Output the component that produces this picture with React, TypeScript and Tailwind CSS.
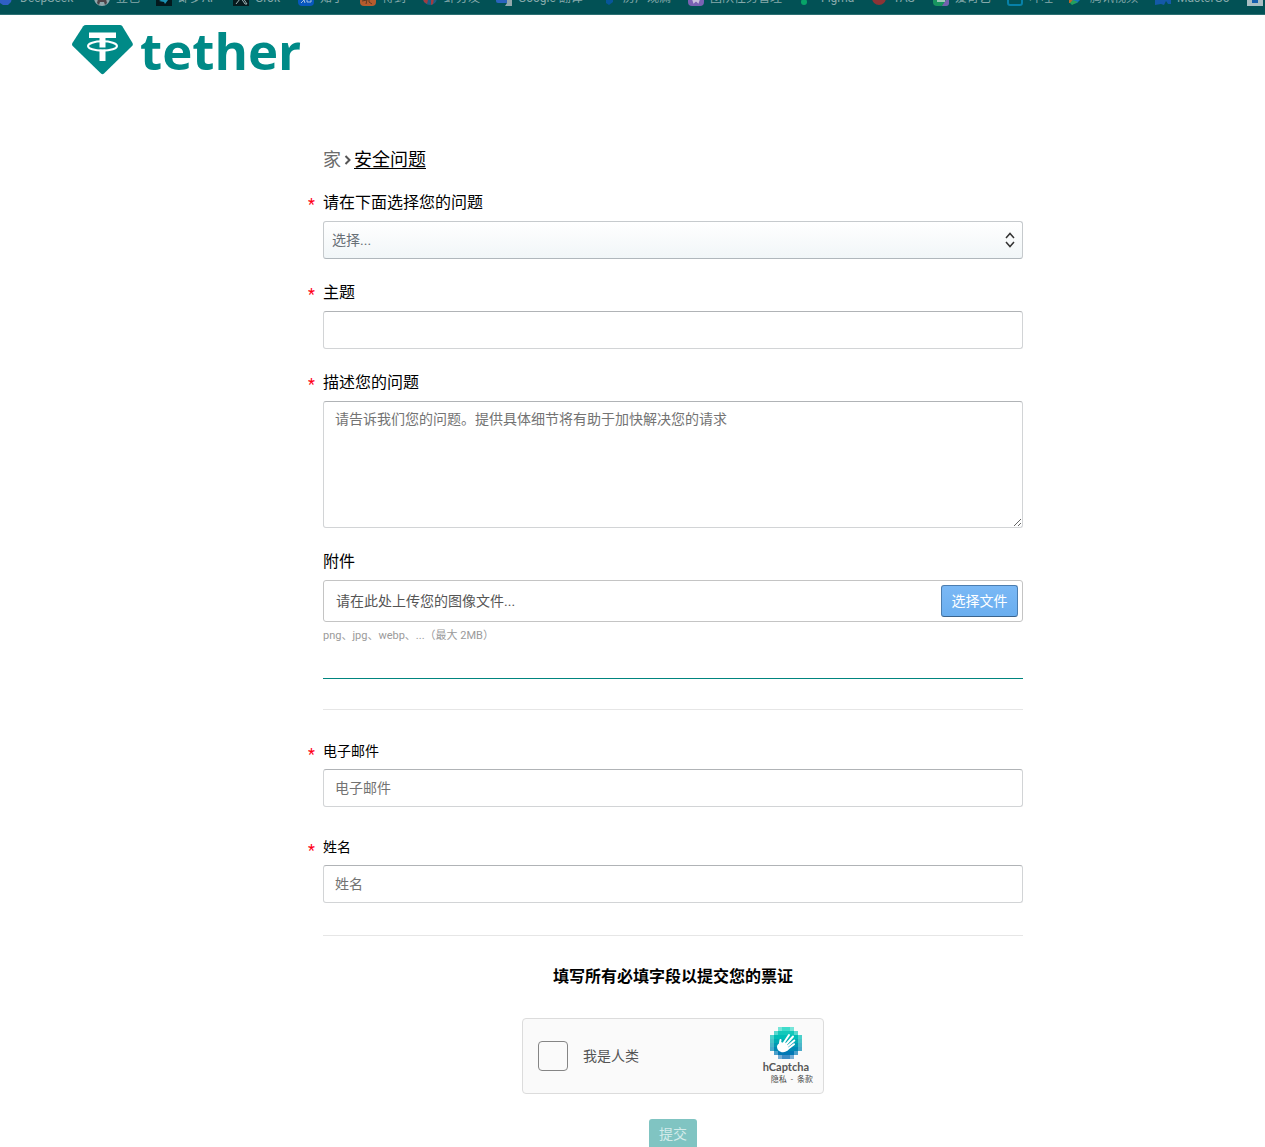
import { useRef, useState } from "react";
import type { ReactNode } from "react";

type Bookmark = { label: string; width: string; icon: ReactNode };

const bookmarks: Bookmark[] = [
  {
    label: "DeepSeek",
    width: "w-[96px]",
    icon: <path d="M0 8h14l-1 4-3 3H5l-3-2z" fill="#2f5fc4" />,
  },
  {
    label: "豆包",
    width: "w-[62px]",
    icon: (
      <>
        <circle cx="8" cy="8" r="8" fill="#8fa7ab" />
        <path d="M4 9h8l1 4-2 2-1-3H6l-1 3-2-2z" fill="#4d4347" />
      </>
    ),
  },
  {
    label: "即梦AI",
    width: "w-[77px]",
    icon: (
      <>
        <path d="M0 0h16v16H0z" fill="#03191d" />
        <path d="M3 11l4-2 5 1-3 4-1-2z" fill="#1b93b4" />
      </>
    ),
  },
  {
    label: "Grok",
    width: "w-[65px]",
    icon: (
      <>
        <path d="M0 0h16v16H0z" fill="#071a1d" />
        <path d="M3 14l4-5M8 8l4 6h2l-4-6" fill="none" stroke="#9db4b6" />
      </>
    ),
  },
  {
    label: "知乎",
    width: "w-[62px]",
    icon: (
      <>
        <rect width="16" height="16" rx="4" fill="#0757bd" />
        <path d="M3 13l3-3 1 3M9 9h4v3H9z" fill="none" stroke="#a5c1df" />
      </>
    ),
  },
  {
    label: "得到",
    width: "w-[62px]",
    icon: (
      <>
        <rect width="16" height="16" rx="4" fill="#b55c2e" />
        <path d="M2 11l5-1-1 4M9 9v3l3 2M12 9h2" fill="none" stroke="#5c3a24" />
      </>
    ),
  },
  {
    label: "虾分发",
    width: "w-[74px]",
    icon: (
      <>
        <circle cx="8" cy="8" r="7" fill="#1a5f86" />
        <path d="M1 9l5 1-1 4-3-2zM9 8l3 1-1 5-2 1z" fill="#a03c40" />
      </>
    ),
  },
  {
    label: "Google 翻译",
    width: "w-[105px]",
    icon: (
      <>
        <path d="M0 0h11v13H2a2 2 0 0 1-2-2z" fill="#2a63bd" />
        <path d="M11 7h5v9H9l2-3z" fill="#93a8ac" />
      </>
    ),
  },
  { label: "房产观澜", width: "w-[87px]", icon: <path d="M5 8h7v4l-4 3-3-2z" fill="#07559a" /> },
  {
    label: "团队任务管理",
    width: "w-[111px]",
    icon: (
      <>
        <rect width="16" height="16" rx="4" fill="#7a62b3" />
        <path d="M5 9l1 3 2-2 2 2 1-3" fill="none" stroke="#c9c0dd" strokeWidth="2" />
      </>
    ),
  },
  { label: "Figma", width: "w-[72px]", icon: <circle cx="5" cy="12" r="3" fill="#07a468" /> },
  { label: "TAS", width: "w-[62px]", icon: <circle cx="8" cy="8" r="7" fill="#8b3436" /> },
  {
    label: "爱奇艺",
    width: "w-[74px]",
    icon: (
      <>
        <rect width="16" height="16" rx="4" fill="#17955f" />
        <path d="M9 16l4-6h3v3a3 3 0 0 1-3 3z" fill="#7560ae" />
        <path d="M4 11h8" stroke="#9cc9b8" strokeWidth="2" />
      </>
    ),
  },
  {
    label: "哔哩",
    width: "w-[61px]",
    icon: <rect x="1" y="3" width="14" height="12" rx="2" fill="none" stroke="#0781a8" strokeWidth="2" />,
  },
  {
    label: "腾讯视频",
    width: "w-[87px]",
    icon: (
      <>
        <path d="M3 8h11l-5 5-4 1z" fill="#1476bd" />
        <path d="M1 8h5l-3 5H1z" fill="#b8672c" />
        <path d="M5 10l5 2-6 3-2-2z" fill="#24a05c" />
      </>
    ),
  },
  {
    label: "MasterGo",
    width: "w-[92px]",
    icon: <path d="M0 4l5 3 5-3 6 3v7h-3l-2-3-2 4-3-1-6 1z" fill="#1459a8" />,
  },
  {
    label: "",
    width: "w-[22px]",
    icon: (
      <>
        <path d="M0 0h16v16H0z" fill="#a9bec3" />
        <path d="M5 9h6v4H5z" fill="#155fae" />
      </>
    ),
  },
];

function BookmarksBar() {
  return (
    <nav
      aria-label="书签"
      className="flex h-[15px] items-end overflow-hidden border-b border-[#2b7073] bg-[#025155] pb-2 text-xs leading-4 text-[#86a9ab]"
    >
      {bookmarks.map((item, i) => (
        <a
          key={i}
          href="#"
          aria-label={item.label || "书签"}
          className={`-ml-0.5 mr-0.5 flex shrink-0 items-center gap-1.5 whitespace-nowrap ${item.width}`}
        >
          <svg viewBox="0 0 16 16" className="size-4 shrink-0" aria-hidden="true">
            {item.icon}
          </svg>
          {item.label}
        </a>
      ))}
    </nav>
  );
}

function Logo() {
  return (
    <a href="#" className="flex h-[50px] items-center gap-[7px] text-[#008a87]">
      <svg viewBox="0 0 61 50" className="h-[50px] w-[61px]" aria-hidden="true">
        <path
          d="M14 0h34q1.500 0 2.300 1.300L60.500 18q.9 1.600-.4 3L32 48.500q-1.500 1.300-3 0L.7 21q-1.200-1.300-.3-3L11.200 1.300Q12.200 0 14 0z"
          fill="currentColor"
        />
        <ellipse cx="30.500" cy="21" rx="14.500" ry="4.700" fill="none" stroke="#fff" strokeWidth="2" />
        <path d="M17 7.500h27v5.500H33.500v9.500h-6V13H17z" fill="#fff" />
        <path d="M27.500 24.500h6V36h-6z" fill="#fff" />
      </svg>
      <span className="font-['Open_Sans'] text-[51px] font-bold leading-[50px]">tether</span>
    </a>
  );
}

function FieldLabel({
  htmlFor,
  required,
  small,
  children,
}: {
  htmlFor: string;
  required?: boolean;
  small?: boolean;
  children: ReactNode;
}) {
  return (
    <label
      htmlFor={htmlFor}
      className={`-ml-[15px] flex text-black ${small ? "mb-2 h-5 text-sm leading-5" : "mb-1.5 h-6 text-base leading-6"}`}
    >
      <span className="w-[15px] shrink-0 pt-1 text-base leading-5 text-[#ff0016]">{required ? "*" : ""}</span>
      {children}
    </label>
  );
}

const inputClass =
  "block w-full rounded-[3px] border border-[#d2d4d6] border-t-[#b0b3b6] bg-white px-[11px] text-sm text-[#333] outline-none placeholder:text-[#737373]";

function CaptchaMark() {
  const rows = [
    { y: 0, from: 2, to: 5, fill: "#3fdccb" },
    { y: 1, from: 1, to: 6, fill: "#12c8ba" },
    { y: 2, from: 0, to: 7, fill: "#00bdb6" },
    { y: 3, from: 0, to: 7, fill: "#00acb3" },
    { y: 4, from: 0, to: 7, fill: "#009ab3" },
    { y: 5, from: 0, to: 7, fill: "#0088b4" },
    { y: 6, from: 1, to: 6, fill: "#0078b5" },
    { y: 7, from: 2, to: 5, fill: "#3d8cc5" },
  ];
  return (
    <svg viewBox="0 0 32 32" className="size-8" aria-hidden="true">
      {rows.map(({ y, from, to, fill }) =>
        Array.from({ length: to - from + 1 }, (_, i) => from + i).map((x) => (
          <rect
            key={`${x}-${y}`}
            x={x * 4}
            y={y * 4}
            width="4"
            height="4"
            fill={fill}
            opacity={x === from || x === to ? 0.7 : 1}
          />
        ))
      )}
      <path
        d="M13 17l6-9M15.500 18l7.500-8.500M16 20.500l8.300-7M17 22.500l7-5.300M9.500 19l1-6"
        stroke="#fff"
        strokeWidth="2"
        strokeLinecap="round"
      />
      <path
        d="M8.500 17l3.300-2 1.700 1.500 1.500-1.500 3 4.500.5 3c-1.500 1.800-3.500 2.700-5.500 2.700-3.500 0-6-2.500-6-5.500 0-1.200.5-2 1.500-2.700z"
        fill="#fff"
      />
    </svg>
  );
}

function Captcha() {
  return (
    <div className="flex h-[76px] w-[302px] items-center rounded border border-[#dcdcdc] bg-[#fafafa] pl-[15px] pr-2.5">
      <label className="flex items-center gap-[15px] text-sm text-[#555]">
        <input
          type="checkbox"
          className="size-[30px] appearance-none rounded border border-[#858585] bg-[#fafafa] checked:bg-[#00838f]"
        />
        我是人类
      </label>
      <div className="ml-auto flex flex-col items-end">
        <div className="flex flex-col items-center pr-1">
          <CaptchaMark />
          <span className="font-[Lato] text-[11px] font-bold leading-4 text-[#555]">hCaptcha</span>
        </div>
        <span className="text-[8px] leading-[10px] text-[#444]">
          <a href="#">隐私</a>
          <span className="mx-1">-</span>
          <a href="#">条款</a>
        </span>
      </div>
    </div>
  );
}

export default function App() {
  const fileRef = useRef<HTMLInputElement>(null);
  const [fileName, setFileName] = useState("");

  return (
    <div className="bg-white font-[Roboto,'Noto_Sans_CJK_SC',sans-serif] text-black">
      <BookmarksBar />

      <header className="flex px-[72px] pt-2.5">
        <Logo />
      </header>

      <main className="flex justify-center pl-[81px] pt-[71px]">
        <form className="w-full max-w-[700px]" onSubmit={(e) => e.preventDefault()}>
          <nav aria-label="面包屑" className="mb-[17px] flex h-7 items-center text-lg leading-7">
            <a href="#" className="text-[#6b6b6b]">
              家
            </a>
            <svg viewBox="0 0 13 18" className="h-[18px] w-[13px]" fill="none" aria-hidden="true">
              <path d="M4.500 5l4 4-4 4" stroke="#555" strokeWidth="2" />
            </svg>
            <a href="#" className="underline underline-offset-2">
              安全问题
            </a>
          </nav>

          <div className="flex flex-col gap-[22px]">
            <div>
              <FieldLabel htmlFor="issue" required>
                请在下面选择您的问题
              </FieldLabel>
              <div className="relative">
                <select
                  id="issue"
                  className="block h-[38px] w-full appearance-none rounded-[3px] border border-[#c6cacd] border-b-[#b0b7bc] bg-linear-to-b from-white to-[#f1f6f8] px-2 text-sm text-[#687077] outline-none"
                >
                  <option>选择...</option>
                </select>
                <svg
                  viewBox="0 0 10 16"
                  className="pointer-events-none absolute right-2 top-[11px] h-4 w-2.5"
                  fill="none"
                  aria-hidden="true"
                >
                  <path d="M1 6l4-4.500L9 6M1 10l4 4.500L9 10" stroke="#333" strokeWidth="1.500" />
                </svg>
              </div>
            </div>

            <div>
              <FieldLabel htmlFor="subject" required>
                主题
              </FieldLabel>
              <input id="subject" type="text" className={`${inputClass} h-[38px]`} />
            </div>

            <div>
              <FieldLabel htmlFor="description" required>
                描述您的问题
              </FieldLabel>
              <textarea
                id="description"
                placeholder="请告诉我们您的问题。提供具体细节将有助于加快解决您的请求"
                className={`${inputClass} h-[127px] resize py-[7px] leading-5`}
              />
            </div>

            <div>
              <FieldLabel htmlFor="attachment">附件</FieldLabel>
              <div className="flex h-[42px] items-center justify-between rounded-[3px] border border-[#c4c4c4] pl-3 pr-1 text-sm text-[#555]">
                <span>{fileName || "请在此处上传您的图像文件..."}</span>
                <input
                  ref={fileRef}
                  id="attachment"
                  type="file"
                  className="hidden"
                  onChange={(e) => setFileName(e.target.files?.[0]?.name ?? "")}
                />
                <button
                  type="button"
                  onClick={() => fileRef.current?.click()}
                  className="h-8 w-[77px] rounded-[3px] border border-[#4b7daf] border-b-[#3a638c] bg-linear-to-b from-[#7ab8f5] to-[#6aaeef] text-white"
                >
                  选择文件
                </button>
              </div>
              <p className="mt-[5px] text-[11px] leading-[18px] text-[#9a9a9a]">png、jpg、webp、...（最大 2MB）</p>
            </div>
          </div>

          <hr className="mt-[33px] h-px border-0 bg-[#00857f]" />
          <hr className="mt-[30px] h-px border-0 bg-[#e6e6e6]" />

          <div className="mt-[31px] flex flex-col gap-[30px]">
            <div>
              <FieldLabel htmlFor="email" required small>
                电子邮件
              </FieldLabel>
              <input id="email" type="email" placeholder="电子邮件" className={`${inputClass} h-[38px]`} />
            </div>
            <div>
              <FieldLabel htmlFor="name" required small>
                姓名
              </FieldLabel>
              <input id="name" type="text" placeholder="姓名" className={`${inputClass} h-[38px]`} />
            </div>
          </div>

          <hr className="mt-8 h-px border-0 bg-[#e6e6e6]" />

          <div className="flex flex-col items-center pt-[29px]">
            <p className="mb-[29px] text-base font-bold leading-6">填写所有必填字段以提交您的票证</p>
            <Captcha />
            <button
              type="submit"
              disabled
              className="mt-[25px] h-[30px] w-12 rounded-t-[3px] bg-[#80c4c2] text-sm text-[#d3ebea]"
            >
              提交
            </button>
          </div>
        </form>
      </main>
    </div>
  );
}
